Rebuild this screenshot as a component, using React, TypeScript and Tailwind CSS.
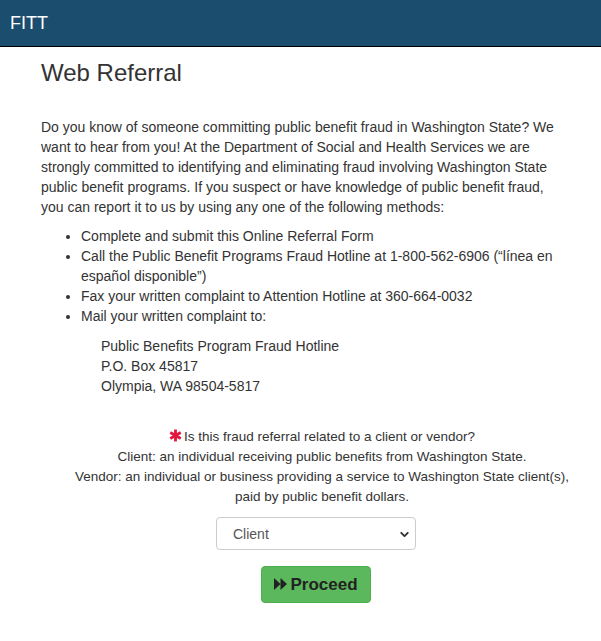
import { ChevronDown } from 'lucide-react';

const font = { fontFamily: '"Liberation Sans", Arial, sans-serif' };

const Asterisk = () => (
  <svg width="13" height="13" viewBox="0 0 12 12" className="inline-block mr-[2px] -mt-[3px] align-middle">
    <g stroke="#e3173e" strokeWidth="2.6" strokeLinecap="butt">
      <line x1="6" y1="0.5" x2="6" y2="11.5" />
      <line x1="1.2" y1="3.2" x2="10.8" y2="8.8" />
      <line x1="1.2" y1="8.8" x2="10.8" y2="3.2" />
    </g>
  </svg>
);

const FastForward = () => (
  <svg width="13" height="12" viewBox="0 0 13 12" className="inline-block mr-[3px] -mt-[2px] align-middle">
    <path d="M0 0 L6.5 6 L0 12 Z M6.5 0 L13 6 L6.5 12 Z" fill="#222" />
  </svg>
);

export default function App() {
  return (
    <div className="min-h-[641px] bg-white text-[#333] text-[14px] leading-[20px]" style={font}>
      <header className="h-[47px] bg-[#1b4d6e] border-b border-black flex items-center px-[10px]">
        <span className="text-white text-[18px]">FITT</span>
      </header>

      <main className="ml-[41px] w-[550px]">
        <h1 className="text-[24px] leading-[28px] mt-[12px] mb-[30px] text-[#333]">Web Referral</h1>

        <p className="mb-[9px] pr-[25px]">
          Do you know of someone committing public benefit fraud in Washington State? We want to hear from you! At the
          Department of Social and Health Services we are strongly committed to identifying and eliminating fraud
          involving Washington State public benefit programs. If you suspect or have knowledge of public benefit fraud,
          you can report it to us by using any one of the following methods:
        </p>

        <ul className="list-disc pl-[40px] mb-[10px]">
          <li>Complete and submit this Online Referral Form</li>
          <li>Call the Public Benefit Programs Fraud Hotline at 1-800-562-6906 (“línea en español disponible”)</li>
          <li>Fax your written complaint to Attention Hotline at 360-664-0032</li>
          <li>Mail your written complaint to:</li>
        </ul>

        <div className="pl-[60px] mb-[31px]">
          <div>Public Benefits Program Fraud Hotline</div>
          <div>P.O. Box 45817</div>
          <div>Olympia, WA 98504-5817</div>
        </div>

        <div className="pl-[26px] pr-[14px] text-center text-[13.5px] mb-[10px]">
          <div>
            <Asterisk />
            Is this fraud referral related to a client or vendor?
          </div>
          <div>Client: an individual receiving public benefits from Washington State.</div>
          <div>Vendor: an individual or business providing a service to Washington State client(s), paid by public benefit dollars.</div>
        </div>

        <div className="flex flex-col items-center gap-[16px]">
          <div className="relative w-[200px] h-[33px] border border-[#ccc] rounded-[4px] bg-white flex items-center pl-[16px] text-[#555]">
            <span>Client</span>
            <ChevronDown size={13} strokeWidth={3.5} className="absolute right-[4px] top-[10px] text-[#333]" />
          </div>
          <button className="w-[110px] h-[37px] bg-[#5cb85c] border border-[#4cae4c] rounded-[4px] text-[#222] text-[17px] font-bold flex items-center justify-center">
            <FastForward />
            Proceed
          </button>
        </div>
      </main>
    </div>
  );
}
